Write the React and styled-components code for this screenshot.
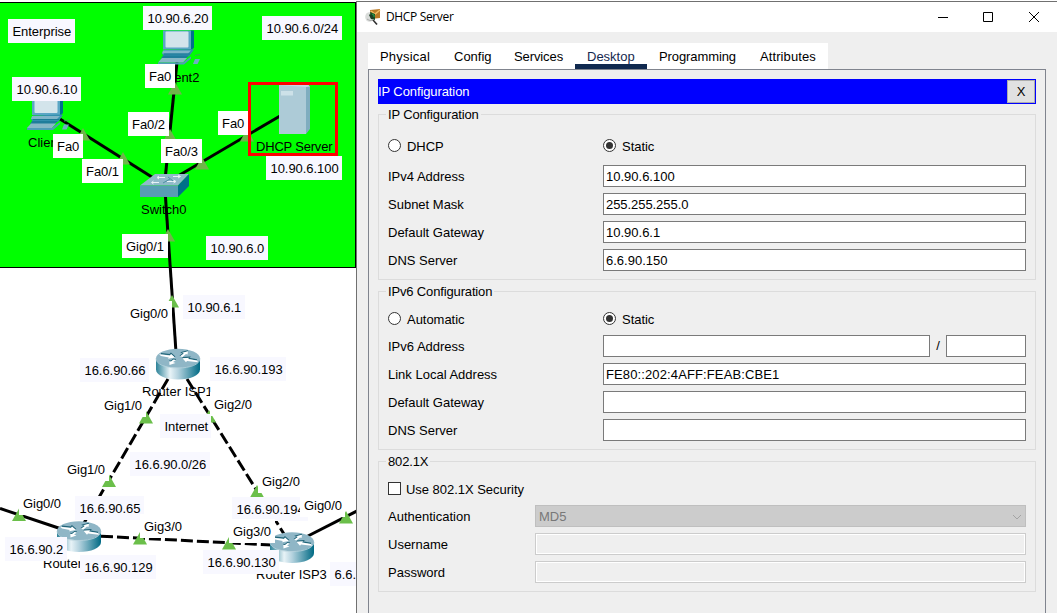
import React from "react";
import styled, { createGlobalStyle } from "styled-components";

const GlobalStyle = createGlobalStyle`
  *, *::before, *::after { box-sizing: border-box; }
  html, body { margin: 0; padding: 0; overflow: hidden; background: #fff; }
  body, input, button {
    font: 13px/16px "Liberation Sans", Arial, sans-serif;
    color: #000;
  }
`;

const Screen = styled.div`
  display: flex;
  width: 1057px;
  height: 613px;
  overflow: hidden;
`;

/* ---------- topology canvas ---------- */

const Canvas = styled.section`
  position: relative;
  flex: none;
  width: 356px;
  height: 613px;
  overflow: hidden;
  background: #fff;
`;

const Zone = styled.div`
  position: absolute;
  left: 0;
  top: 2px;
  width: 356px;
  height: 266px;
  background: #00ff00;
  border: solid #000;
  border-width: 1px 1px 1px 0;
`;

const Drawing = styled.svg`
  position: absolute;
  left: 0;
  top: 0;
`;

const DeviceName = styled.span`
  position: absolute;
  left: ${(p) => p.$x}px;
  top: ${(p) => p.$y}px;
  white-space: nowrap;
  letter-spacing: ${(p) => p.$track || 0}px;
`;

const Tag = styled.span`
  position: absolute;
  left: ${(p) => p.$x}px;
  top: ${(p) => p.$y}px;
  width: ${(p) => p.$w}px;
  height: 24px;
  padding-left: ${(p) => (p.$note ? 4.5 : 4)}px;
  line-height: 25px;
  letter-spacing: -0.05px;
  white-space: nowrap;
  background: ${(p) => (p.$note ? "#f8f8ff" : "#fff")};
`;

const Highlight = styled.div`
  position: absolute;
  left: 248px;
  top: 82px;
  width: 90px;
  height: 74px;
  border: 3px solid #f00;
`;

const links = [
  { from: [60, 119], to: [155, 179] },
  { from: [177, 62], to: [165, 180] },
  { from: [280, 116], to: [178, 176] },
  { from: [165, 190], to: [176, 352] },
  { from: [0, 508.5], to: [60, 528.5] },
  { from: [357, 511], to: [306, 537] },
  { from: [168, 379], to: [84, 523], dashed: true },
  { from: [187, 379], to: [284, 534], dashed: true },
  { from: [101, 536.2], to: [272, 545], dashed: true },
];

const ports = [
  [175, 82], [170, 129], [83, 128], [123, 152], [247, 129], [202, 157],
  [168, 229], [172, 295], [146, 411], [209, 410], [109, 474.5], [19, 508.5],
  [140, 532], [257, 485], [229, 537], [346, 511],
];

const names = [
  { text: "Client1", x: 28, y: 135 },
  { text: "Client2", x: 159, y: 70 },
  { text: "DHCP Server", x: 256, y: 139, track: -0.2 },
  { text: "Switch0", x: 141, y: 202 },
  { text: "Router ISP1", x: 142, y: 384 },
  { text: "Router", x: 43, y: 556 },
  { text: "Router ISP3", x: 256, y: 567 },
];

const tags = [
  { text: "Enterprise", x: 8, y: 19, w: 67, note: true },
  { text: "10.90.6.20", x: 143, y: 6, w: 69, note: true },
  { text: "10.90.6.0/24", x: 262, y: 16, w: 80, note: true },
  { text: "10.90.6.10", x: 12, y: 77, w: 69, note: true },
  { text: "10.90.6.100", x: 266, y: 156, w: 76, note: true },
  { text: "10.90.6.0", x: 206, y: 236, w: 62, note: true },
  { text: "10.90.6.1", x: 183, y: 295, w: 62, note: true },
  { text: "16.6.90.66", x: 80, y: 358, w: 69, note: true },
  { text: "16.6.90.193", x: 210, y: 357, w: 76, note: true },
  { text: "Internet", x: 160, y: 414, w: 51, note: true },
  { text: "16.6.90.0/26", x: 130, y: 452, w: 80, note: true },
  { text: "16.6.90.65", x: 75, y: 496, w: 69, note: true },
  { text: "16.6.90.2", x: 5, y: 537, w: 62, note: true },
  { text: "16.6.90.129", x: 80, y: 555, w: 76, note: true },
  { text: "16.6.90.194", x: 232, y: 497, w: 76, note: true },
  { text: "16.6.90.130", x: 203, y: 550, w: 76, note: true },
  { text: "6.6.", x: 330, y: 562, w: 26, note: true },
  { text: "Fa0", x: 145, y: 64, w: 30 },
  { text: "Fa0/2", x: 128, y: 112, w: 41 },
  { text: "Fa0", x: 218, y: 111, w: 30 },
  { text: "Fa0", x: 53, y: 134, w: 30 },
  { text: "Fa0/1", x: 82, y: 159, w: 41 },
  { text: "Fa0/3", x: 161, y: 139, w: 41 },
  { text: "Gig0/1", x: 122, y: 234, w: 46 },
  { text: "Gig0/0", x: 126, y: 301, w: 46 },
  { text: "Gig1/0", x: 100, y: 393, w: 46 },
  { text: "Gig2/0", x: 210, y: 392, w: 46 },
  { text: "Gig1/0", x: 63, y: 457, w: 46 },
  { text: "Gig2/0", x: 258, y: 469, w: 46 },
  { text: "Gig0/0", x: 19, y: 491, w: 46 },
  { text: "Gig3/0", x: 140, y: 514, w: 46 },
  { text: "Gig3/0", x: 229, y: 519, w: 46 },
  { text: "Gig0/0", x: 300, y: 493, w: 45 },
];

const Router = ({ x, y }) => (
  <g transform={`translate(${x} ${y})`}>
    <path d="M0 10V21C0 27 10 31 22 31S44 27 44 21V10Z" fill="url(#barrel)" />
    <ellipse cx="22" cy="9.8" rx="22" ry="9.5" fill="#8fb6c6" />
    <path d="M0 10C0 16 10 19.5 22 19.5S44 16 44 10" fill="none" stroke="#b7d2dc" strokeWidth=".8" />
    <path d="M5 5.2L14 6L15 4.8L19 8.4" stroke="#206478" strokeWidth="1.2" fill="none" />
    <path d="M41 11.4L32.5 9.8L33.5 8.6L26.500 9.2" stroke="#206478" strokeWidth="1.2" fill="none" />
    <path d="M24 7.400L27.500 4.600L26 3.900L32 2.300" stroke="#206478" strokeWidth="1.2" fill="none" />
    <path d="M20 11L17.500 10.600L15 12.700L13.300 12.400" stroke="#206478" strokeWidth="1.2" fill="none" />
    <g fill="#fff">
      <path d="M3 5.7L14 6.9L15 5.6L19 9L12 10.3L12.8 8.9L5 7.6Z" />
      <path d="M42 13.7L31 12.5L30 13.8L26.5 9.8L33.5 9.2L32 10.5L41 12Z" />
      <path d="M24 7.8L27.8 5L26 4.3L32 2.7L31.5 6L30 5.5L26.5 8.4Z" />
      <path d="M20 11.4L17 13.4L19.5 14.4L13.5 16.5L13.3 12.8L15 13.1L17.5 11Z" />
    </g>
  </g>
);

const Computer = ({ x, y }) => (
  <g transform={`translate(${x} ${y})`}>
    <path d="M27 -4H31V13L27 17Z" fill="#00708c" />
    <path d="M0 -4H28V15H0Z" fill="#5ba6c5" />
    <rect x="2.5" y="-3" width="23" height="16" rx="1" fill="#d3e4eb" />
    <path d="M1 15.5L28 14.5L31 15L26 22H1L-1 19Z" fill="#338fae" />
    <path d="M0 16H28L25 19H-1Z" fill="#7fb4c8" />
    <path d="M1 19.500H27" stroke="#1c7896" fill="none" />
    <path d="M0 21H26L23 24H-2Z" fill="#1f7d9b" />
    <path d="M-1 23.500H24L20 28H-5Z" fill="#87b7c6" />
    <path d="M-5 28H20L28 22V24L21 30H-5Z" fill="#4e9db7" />
    <path d="M32 24.500H37L34.500 29.500H30Z" fill="#6fadc2" />
    <path d="M32 21L37 20" stroke="#3fa95a" fill="none" />
  </g>
);

const Switch = () => (
  <g>
    <path d="M155 174H189L178 185.5H140Z" fill="#8fbac9" />
    <path d="M140 185.5H178V197H140Z" fill="#589db4" />
    <path d="M178 185.5L189 174V186L178 197Z" fill="#006f89" />
    <g stroke="#e8f3f7" strokeWidth="1" fill="none">
      <path d="M158 177.5H165M159 176L157 177.500L159 179M173 176.5H180M178 175L180.500 176.500L178 178M152 182.500H159M153.500 181L151.500 182.500L153.500 184M167 181.500H175M173.500 180L176 181.500L173.500 183" />
      <path d="M168 177L173 181M163 183L170 179" stroke="#4f8fa4" />
    </g>
  </g>
);

const Server = () => (
  <g>
    <path d="M279 85H306V134H279Z" fill="#adcbd7" />
    <path d="M306 85L310 86.5V129L306 134Z" fill="#7fadbf" />
    <path d="M279 85L282 84.5H308L310 86.5L306 87Z" fill="#c4dbe3" />
    <rect x="281" y="91" width="12" height="4.5" fill="#cde1e8" />
  </g>
);

const Topology = () => (
  <Canvas>
    <Zone />
    <Drawing width="356" height="613" viewBox="0 0 356 613">
      <defs>
        <linearGradient id="barrel">
          <stop offset="0" stopColor="#2d8298" />
          <stop offset=".32" stopColor="#e8f3f7" />
          <stop offset=".5" stopColor="#b5d3df" />
          <stop offset="1" stopColor="#006a84" />
        </linearGradient>
      </defs>
      {links.map((l, i) => (
        <line
          key={i}
          x1={l.from[0]}
          y1={l.from[1]}
          x2={l.to[0]}
          y2={l.to[1]}
          stroke="#000"
          strokeWidth="3"
          strokeDasharray={l.dashed ? "12 4" : undefined}
        />
      ))}
      {ports.map(([x, y], i) => (
        <path key={i} d={`M${x} ${y}l7 12.5h-14z`} fill={i < 7 ? "#70b54a" : "#6bbf4a"} />
      ))}
      <Computer x={32} y={100} />
      <Computer x={163} y={34.5} />
      <Server />
      <Switch />
      <Router x={156} y={348.5} />
      <Router x={57} y={521} />
      <Router x={270} y={532} />
    </Drawing>
    {names.map((n) => (
      <DeviceName key={n.text} $x={n.x} $y={n.y} $track={n.track}>{n.text}</DeviceName>
    ))}
    {tags.map((t, i) => (
      <Tag key={i} $x={t.x} $y={t.y} $w={t.w} $note={t.note}>{t.text}</Tag>
    ))}
    <Highlight />
  </Canvas>
);

/* ---------- configuration window ---------- */

const Window = styled.main`
  display: flex;
  flex-direction: column;
  flex: 1;
  height: 612px;
  margin-top: 1px;
  background: #efefef;
  border: solid #707070;
  border-width: 1px 0 0 1px;
`;

const TitleBar = styled.header`
  display: flex;
  align-items: center;
  flex: none;
  height: 30px;
  padding: 0 17px 0 8px;
  background: #fff;
`;

const Title = styled.h1`
  flex: 1;
  margin: 0 0 0 5px;
  font: 400 12px/16px "Open Sans", "Noto Sans", sans-serif;
  letter-spacing: -0.35px;
`;

const WindowButtons = styled.div`
  display: flex;
  align-items: center;
  gap: 34px;
  svg { display: block; fill: none; stroke: #000; }
`;

const TabBar = styled.nav`
  display: flex;
  flex: none;
  align-self: flex-start;
  height: 26px;
  margin: 11px 0 0 11px;
  background: #fff;
`;

const Tab = styled.div`
  width: ${(p) => p.$w}px;
  padding: 6px 0 0 12px;
  letter-spacing: ${(p) => p.$track}px;
  color: ${(p) => (p.$active ? "#15294f" : "#000")};
  border-bottom: ${(p) => (p.$active ? "5px solid #10294f" : "0")};
`;

const Panel = styled.section`
  flex: 1;
  width: 678px;
  margin-left: 11px;
  padding: 9px 9px 0;
  border: 1px solid #80848e;
  border-bottom: 0;
`;

const Banner = styled.div`
  display: flex;
  align-items: center;
  justify-content: space-between;
  height: 25px;
  padding-right: 1px;
  letter-spacing: -0.1px;
  color: #fff;
  background: #0000ff;
`;

const CloseButton = styled.button`
  width: 28px;
  height: 23px;
  padding: 0;
  background: #e1e1e1;
  border: 1px solid #adadad;
`;

const Group = styled.section`
  height: ${(p) => p.$h}px;
  margin-top: ${(p) => p.$mt}px;
  padding: 0 9px;
  border: 1px solid #dcdcdc;
`;

const Legend = styled.h2`
  width: fit-content;
  height: 16px;
  margin: -8px 0 0 -2px;
  padding: 0 2px;
  font: inherit;
  letter-spacing: -0.15px;
  background: #efefef;
`;

const Choices = styled.div`
  display: grid;
  grid-template-columns: 215px 1fr;
  height: 21px;
  margin: ${(p) => (p.$roomy ? "12px 0 9px" : "8px 0 6px")};
`;

const Choice = styled.label`
  display: flex;
  align-items: flex-start;
  gap: ${(p) => p.$gap || 6}px;
  height: 21px;
  line-height: 23px;
  letter-spacing: -0.03px;
`;

const Radio = styled.span`
  display: grid;
  place-items: center;
  width: 13px;
  height: 13px;
  margin-top: 4px;
  background: #fff;
  border: 1px solid #333;
  border-radius: 50%;
  &::after {
    content: "";
    width: 7px;
    height: 7px;
    border-radius: 50%;
    background: ${(p) => (p.$on ? "#333" : "transparent")};
  }
`;

const Checkbox = styled.span`
  width: 13px;
  height: 13px;
  margin-top: 4px;
  background: #fff;
  border: 1px solid #333;
`;

const Rows = styled.div`
  display: grid;
  gap: 6px;
`;

const Row = styled.div`
  display: grid;
  grid-template-columns: ${(p) => (p.$narrow ? 147 : 215)}px 1fr;
  align-items: center;
  height: 22px;
`;

const RowLabel = styled.span`
  padding-top: 1px;
  line-height: 17px;
`;

const Field = styled.div`
  height: 22px;
  padding: 0 2px;
  line-height: 21px;
  letter-spacing: ${(p) => p.$track || 0}px;
  background: #fff;
  border: 1px solid #7a7a7a;
`;

const DisabledField = styled.div`
  height: 22px;
  background: #efefef;
  border: 1px solid #ccc;
  box-shadow: inset 0 0 0 1px #fff;
`;

const SelectBox = styled.div`
  display: flex;
  align-items: center;
  justify-content: space-between;
  height: 22px;
  padding: 1px 3px 0;
  color: #787878;
  background: #ccc;
  border: 1px solid #bfbfbf;
`;

const PrefixPair = styled.div`
  display: grid;
  grid-template-columns: 327px 16px 80px;
  align-items: center;
  text-align: center;
`;

const AppIcon = () => (
  <svg width="16" height="17" viewBox="0 0 16 17">
    <ellipse cx="4.500" cy="8" rx="4.300" ry="4.800" fill="#d9dcda" />
    <path d="M5 1L15 0V9L6 10Z" fill="#b97a26" />
    <path d="M6 2L10 5L15 1" stroke="#f1bd63" strokeWidth="1.400" fill="none" />
    <path d="M5 3L10 5V11L6 10Z" fill="#155325" />
    <path d="M7 5L9 6V8" stroke="#2ca04b" fill="none" />
    <path d="M4 6C5 4 8 6 9 10L6 10Z" fill="#1c3d24" />
    <path d="M2 10C5 12 7 12 9 10" stroke="#aaa" fill="none" />
    <path d="M8 11L12 15.500" stroke="#2f2f2f" strokeWidth="1.600" />
  </svg>
);

const FieldRow = ({ label, value, track }) => (
  <Row>
    <RowLabel>{label}</RowLabel>
    <Field $track={track}>{value}</Field>
  </Row>
);

const tabs = [
  ["Physical", 74, 0.2],
  ["Config", 60, 0],
  ["Services", 73, -0.1],
  ["Desktop", 72, 0],
  ["Programming", 101, -0.1],
  ["Attributes", 80, 0.1],
];

export default function App() {
  return (
    <>
      <GlobalStyle />
      <Screen>
        <Topology />
        <Window>
          <TitleBar>
            <AppIcon />
            <Title>DHCP Server</Title>
            <WindowButtons>
              <svg width="12" height="12"><path d="M2 6.500H12" /></svg>
              <svg width="12" height="12"><path d="M1.500 1.500H10.500V10.500H1.500Z" /></svg>
              <svg width="12" height="12"><path d="M1 1L11 11M11 1L1 11" /></svg>
            </WindowButtons>
          </TitleBar>
          <TabBar>
            {tabs.map(([name, w, track]) => (
              <Tab key={name} $w={w} $track={track} $active={name === "Desktop"}>{name}</Tab>
            ))}
          </TabBar>
          <Panel>
            <Banner>
              <span>IP Configuration</span>
              <CloseButton>X</CloseButton>
            </Banner>

            <Group $h={166} $mt={10}>
              <Legend>IP Configuration</Legend>
              <Choices $roomy>
                <Choice><Radio />DHCP</Choice>
                <Choice><Radio $on />Static</Choice>
              </Choices>
              <Rows>
                <FieldRow label="IPv4 Address" value="10.90.6.100" />
                <FieldRow label="Subnet Mask" value="255.255.255.0" track={-0.06} />
                <FieldRow label="Default Gateway" value="10.90.6.1" />
                <FieldRow label="DNS Server" value="6.6.90.150" />
              </Rows>
            </Group>

            <Group $h={159} $mt={11}>
              <Legend>IPv6 Configuration</Legend>
              <Choices>
                <Choice><Radio />Automatic</Choice>
                <Choice><Radio $on />Static</Choice>
              </Choices>
              <Rows>
                <Row>
                  <RowLabel>IPv6 Address</RowLabel>
                  <PrefixPair><Field />/<Field /></PrefixPair>
                </Row>
                <FieldRow label="Link Local Address" value="FE80::202:4AFF:FEAB:CBE1" track={0.12} />
                <FieldRow label="Default Gateway" />
                <FieldRow label="DNS Server" />
              </Rows>
            </Group>

            <Group $h={131} $mt={11}>
              <Legend>802.1X</Legend>
              <Choices>
                <Choice $gap={5}><Checkbox />Use 802.1X Security</Choice>
              </Choices>
              <Rows>
                <Row $narrow>
                  <RowLabel>Authentication</RowLabel>
                  <SelectBox>
                    MD5
                    <svg width="10" height="6" fill="none" stroke="#a3a3a3"><path d="M1 1L5 5L9 1" /></svg>
                  </SelectBox>
                </Row>
                <Row $narrow><RowLabel>Username</RowLabel><DisabledField /></Row>
                <Row $narrow><RowLabel>Password</RowLabel><DisabledField /></Row>
              </Rows>
            </Group>
          </Panel>
        </Window>
      </Screen>
    </>
  );
}
